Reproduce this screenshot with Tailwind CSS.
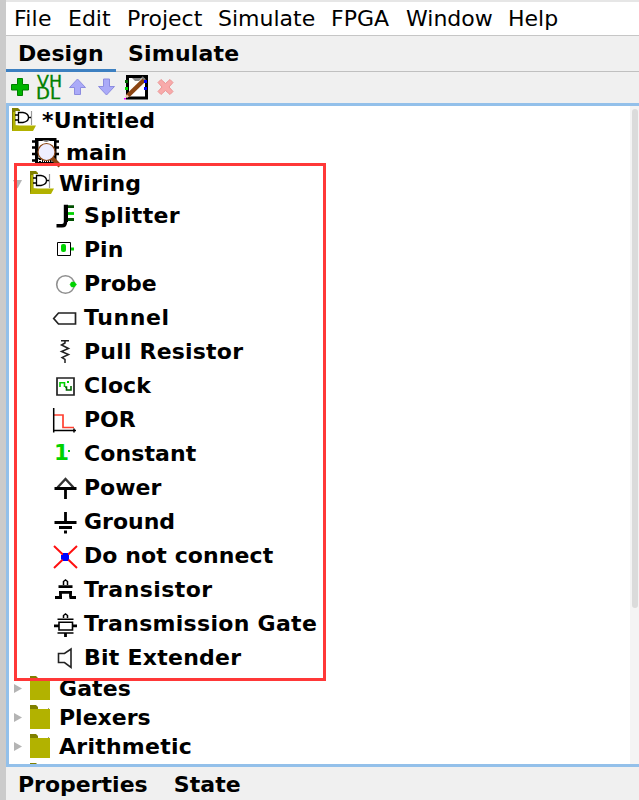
<!DOCTYPE html>
<html lang="en">
<head>
<meta charset="utf-8">
<title>Logisim</title>
<script src="https://cdn.jsdelivr.net/npm/@tailwindcss/browser@4"></script>
</head>
<body class="w-[639px] h-[800px] overflow-hidden bg-[#f0f0f0] text-black font-['DejaVu_Sans',sans-serif] text-[22px] leading-none whitespace-nowrap">
<svg class="hidden">
  <defs>
    <g id="open">
      <path d="M0 0H6L8 2V3H3.500V17L1 23H0Z" fill="#808000"/>
      <path d="M1 4H3V20L1 23Z" fill="#b0b000"/>
      <path d="M2 17L8 17.500H24L21 23H0Z" fill="#b2b200"/>
      <path d="M19.500 3V17" stroke="#999" stroke-width="1.2"/>
      <path d="M6.500 4.500H11Q16.500 5.500 16.500 9.500T11 14.500H6.500ZM3 7H6.500M3 12H6.500M16.500 9.500H19" fill="#fff" stroke="#000" stroke-width="1.3"/>
    </g>
    <g id="closed">
      <path d="M0 0H6L8 2V4H0Z" fill="#808000"/>
      <path d="M0 4H20V24H0Z" fill="#b2b200"/>
      <path d="M18 3H19V4H18Z" fill="#999"/>
    </g>
  </defs>
</svg>
<div class="flex flex-col h-full border-l-[6px] border-l-[#cbcbcb]">
  <nav class="flex h-9 shrink-0 items-center bg-white border-t-2 border-t-[#e6e6e6] border-b border-b-[#c6c6c6] pl-[8px]">
    <span class="w-[54px] tracking-[0.2px]">File</span><span class="w-[59px]">Edit</span><span class="w-[91px]">Project</span><span class="w-[113px]">Simulate</span><span class="w-[75px]">FPGA</span><span class="w-[102px]">Window</span><span>Help</span>
  </nav>
  <div class="flex h-9 shrink-0 font-bold border-b border-b-[#c0c0c0]">
    <div class="flex h-9 w-[110px] shrink-0 items-center pl-[12px] border-b-[3px] border-b-[#3d80c1] pt-[2px] tracking-[0.1px]">Design</div>
    <div class="flex h-9 items-center pl-[12px] pb-px tracking-[0.2px]">Simulate</div>
  </div>
  <div class="flex h-[31px] shrink-0">
    <svg class="w-[28px] h-[31px]" viewBox="6 72 28 31"><path d="M17.500 78.500H22.500V84.500H28.500V90H22.500V95.500H17.500V90H11.500V84.500H17.500Z" fill="#00b400" stroke="#008000"/></svg>
    <svg class="w-[30px] h-[31px]" viewBox="34 72 30 31" fill="#008000" stroke="#008000" stroke-width=".3" font-size="16" font-family="DejaVu Sans"><text x="37" y="87" textLength="25" lengthAdjust="spacingAndGlyphs">VH</text><text x="36" y="99" textLength="24" lengthAdjust="spacingAndGlyphs">DL</text></svg>
    <svg class="w-[28px] h-[31px]" viewBox="64 72 28 31"><path d="M77.500 79L85.500 87.500H80.500V94.500H74.500V87.500H69.500Z" fill="#aaaaf8" stroke="#8c8ce0"/></svg>
    <svg class="w-[28px] h-[31px]" viewBox="92 72 28 31"><path d="M106.500 95L98.500 86.500H103.500V79H109.500V86.500H114.500Z" fill="#aaaaf8" stroke="#8c8ce0"/></svg>
    <svg class="w-[32px] h-[31px]" viewBox="120 72 32 31"><path d="M127.500 76.500H146.500V98H127.500Z" fill="#fff" stroke="#000" stroke-width="3"/><path d="M132 78H142L139 81H135Z" fill="#888"/><path d="M127.500 96L145 79" stroke="#8b4513" stroke-width="4.500"/><path d="M142 77L145 80" stroke="#777" stroke-width="2"/><path d="M125 96.500L127 94.500L129 96.500L127 98Z" fill="#f0c8a8"/><path d="M125 80H128V83H125Z" fill="#006400"/><path d="M125 87H128V90H125Z" fill="#00e000"/><path d="M144 80H147V83H144ZM144 87H147V90H144Z" fill="#00f"/><path d="M124 98H126V99.500H124Z" fill="#f0f"/></svg>
    <svg class="w-[28px] h-[31px]" viewBox="152 72 28 31"><path d="M161 79.500L165.500 83.500L170 79.500L173 82.500L169 87L173 91.500L170 94.500L165.500 90.500L161 94.500L158 91.500L162 87L158 82.500Z" fill="#f8aaaa" stroke="#eb9696"/></svg>
  </div>
  <main class="relative flex h-[664px] shrink-0 overflow-hidden bg-white border-y-[3px] border-l-[3px] border-[#93c0ea]">
    <div class="flex-1 font-bold">
      <div class="flex h-8 -mt-0.5 items-center gap-0.5"><svg class="w-[31px] h-8" viewBox="9 104 31 32"><use href="#open" x="12" y="108"/></svg><span class="pt-0.5 tracking-[0.15px]">*Untitled</span></div>
      <div class="flex h-8 items-center"><svg class="w-[57px] h-8" viewBox="9 136 57 32">
        <path d="M35 138H56.500V163H35Z" fill="#000"/><path d="M32 141.500H36M32 147.500H36M32 154H36M32 160.500H36M56 141.500H59M56 147.500H59M56 154H59" stroke="#000" stroke-width="2.500"/><path d="M38.500 141H54V158H38.500Z" fill="#fff"/><path d="M42 140H50Q46.500 144 42 140Z" fill="#777"/><path d="M38.500 162V159.500L40 161L41.500 159.500V162M43.500 162V160H45.500V162M47.500 159V162M49.500 162V159.500H52V162" fill="none" stroke="#fff"/><path d="M52 158L60 166" stroke="#8b4513" stroke-width="4"/><circle cx="46.500" cy="152" r="8.500" fill="#eeeeff" stroke="#8b4513" stroke-width="1.200"/></svg><span class="pt-0.5">main</span></div>
      <div class="flex h-[30px] items-center gap-px"><svg class="w-[49px] h-[30px]" viewBox="9 168 49 30"><path d="M13 180H22L17.500 188.500Z" fill="#b4b4b4"/><use href="#open" x="30" y="171"/></svg><span class="pt-0.5 tracking-[0.1px]">Wiring</span></div>
      <div class="flex flex-col pl-[43px] *:flex *:h-[34px] *:items-center *:gap-1.5">
        <div><svg class="w-[26px] h-[34px]" viewBox="52 198 26 34"><path d="M66 206.700H74M66 219.500H74" stroke="#005000" stroke-width="2.800"/><path d="M67 213.500H74" stroke="#00d200" stroke-width="2.800"/><path d="M68 206.500H65.500V222Q65.500 225.800 62 225.800H56.500" fill="none" stroke="#000" stroke-width="3.400"/><path d="M64 205H68V222H64Z"/></svg><span class="pt-0.5 tracking-[0.3px]">Splitter</span></div>
        <div><svg class="w-[26px] h-[34px]" viewBox="52 232 26 34"><path d="M57.500 242.500H70.500V255.500H57.500Z" fill="none" stroke="#000"/><rect x="61" y="244" width="5" height="8" rx="2" fill="#00d200"/><path d="M71 247.500H74V250.500H71Z" fill="#00d200"/></svg><span class="pt-0.5">Pin</span></div>
        <div><svg class="w-[26px] h-[34px]" viewBox="52 266 26 34"><circle cx="65.500" cy="284.500" r="8.800" fill="none" stroke="#909090" stroke-width="1.600"/><path d="M70 284.500L71.500 282H74.500L76.500 284.500L74.500 287H71.500Z" fill="#00d200" stroke="#00d200" stroke-width=".5"/></svg><span class="pt-0.5">Probe</span></div>
        <div><svg class="w-[26px] h-[34px]" viewBox="52 300 26 34"><path d="M53.700 318.500L58.500 313H75.500V324H58.500Z" fill="none" stroke="#222" stroke-width="1.700"/></svg><span class="pt-0.5 tracking-[0.6px]">Tunnel</span></div>
        <div><svg class="w-[26px] h-[34px]" viewBox="52 334 26 34"><path d="M61 340.700H69M65 341V343L61.500 345L68.500 348.500L61.500 351.500L68.500 354.500L62 357.500L65 359.500V363" fill="none" stroke="#222" stroke-width="1.500"/></svg><span class="pt-0.5 tracking-[0.2px]">Pull Resistor</span></div>
        <div><svg class="w-[26px] h-[34px]" viewBox="52 368 26 34"><path d="M57 378H74V395H57Z" fill="none" stroke="#222" stroke-width="1.700"/><path d="M60 387V382.700H64.500V387" fill="none" stroke="#00d200" stroke-width="1.600"/><path d="M67 381H69V383H67Z" fill="#00d200"/><path d="M65 387H66.500V390H71V386" fill="none" stroke="#006400" stroke-width="1.600"/></svg><span class="pt-0.5 tracking-[0.1px]">Clock</span></div>
        <div><svg class="w-[26px] h-[34px]" viewBox="52 402 26 34"><path d="M54 415H63V427.500H74" fill="none" stroke="#ff4030" stroke-width="1.700"/><path d="M53.700 408V432.500M53 430.500H76M74 428.500V432.500" stroke="#000" stroke-width="1.500"/></svg><span class="pt-0.5">POR</span></div>
        <div><svg class="w-[26px] h-[34px]" viewBox="52 436 26 34" fill="#00d200"><text x="54" y="460" font-size="21.500">1</text><path d="M68 450H70V452H68Z"/></svg><span class="pt-0.5 tracking-[0.1px]">Constant</span></div>
        <div><svg class="w-[26px] h-[34px]" viewBox="52 470 26 34"><path d="M57.500 487.500L65.500 479L73.500 487.500" fill="none" stroke="#333" stroke-width="2.400"/><path d="M54.500 488.500H76.500M65.500 489V499" stroke="#000" stroke-width="2.800"/></svg><span class="pt-0.5">Power</span></div>
        <div><svg class="w-[26px] h-[34px]" viewBox="52 504 26 34"><path d="M65.500 512V522M54.500 522.500H76.500M59 527.500H72M64 532H67" stroke="#000" stroke-width="2.800"/></svg><span class="pt-0.5">Ground</span></div>
        <div><svg class="w-[26px] h-[34px]" viewBox="52 538 26 34"><path d="M54 546L77 568M77 546L54 568" stroke="#ff1010" stroke-width="2"/><path d="M63 553H68V555H69V559.500H68V561H63V559.500H61V555H63Z" fill="#00f"/></svg><span class="pt-0.5 tracking-[0.1px]">Do not connect</span></div>
        <div><svg class="w-[26px] h-[34px]" viewBox="52 572 26 34" fill="none" stroke="#000"><path d="M63.500 585V581.500L65.500 580L67.500 581.500V585" stroke-width="1.500"/><path d="M58.500 586.600H72.500M59 592.300H72M60.500 592V597.500M55 597.500H62M70.500 592V597.500M69.500 597.500H76" stroke-width="2.800"/></svg><span class="pt-0.5 tracking-[0.45px]">Transistor</span></div>
        <div><svg class="w-[26px] h-[34px]" viewBox="52 606 26 34" fill="none" stroke="#000"><path d="M63.500 618V615.500L65.500 614L67.500 615.500V618" stroke-width="1.500"/><path d="M57.500 619.300H73.500M57.500 633H73.500M59 622.300H72.500V630H59Z" stroke-width="1.600"/><path d="M54 625.800H59M72 625.800H77M65.500 633V637" stroke-width="2.800"/></svg><span class="pt-0.5 tracking-[0.3px]">Transmission Gate</span></div>
        <div><svg class="w-[26px] h-[34px]" viewBox="52 640 26 34"><path d="M58.500 653.500H64.500L71 649V667.500L64.500 662.500H58.500Z" fill="none" stroke="#222" stroke-width="1.600"/></svg><span class="pt-0.5 tracking-[0.25px]">Bit Extender</span></div>
      </div>
      <div class="flex h-[29px] items-center gap-px"><svg class="w-[49px] h-[29px]" viewBox="9 674 49 29"><path d="M14 684L22 688.500L14 693Z" fill="#b4b4b4"/><use href="#closed" x="30" y="676"/></svg><span class="tracking-[0.1px]">Gates</span></div>
      <div class="flex h-[29px] items-center gap-px"><svg class="w-[49px] h-[29px]" viewBox="9 703 49 29"><path d="M14 713L22 717.500L14 722Z" fill="#b4b4b4"/><use href="#closed" x="30" y="705"/></svg><span>Plexers</span></div>
      <div class="flex h-[29px] items-center gap-px"><svg class="w-[49px] h-[29px]" viewBox="9 732 49 29"><path d="M14 742L22 746.500L14 751Z" fill="#b4b4b4"/><use href="#closed" x="30" y="734"/></svg><span class="tracking-[0.25px]">Arithmetic</span></div>
      <div class="flex h-[29px] items-center"><svg class="w-[49px] h-[29px]" viewBox="9 761 49 29"><use href="#closed" x="30" y="763"/></svg></div>
    </div>
    <div class="w-[9px] bg-[#f4f4f4] pt-[3px] pl-[2px]"><div class="h-[499px] w-[6px] rounded-full bg-[#dbdbdb]"></div></div>
    <div class="absolute left-[5px] top-[57px] w-[312px] h-[518px] border-3 border-[#ff3838]"></div>
  </main>
  <footer class="flex flex-1 items-center gap-[26px] pl-[12px] font-bold pt-[3px]">
    <span>Properties</span><span class="tracking-[0.1px]">State</span>
  </footer>
</div>
</body>
</html>
